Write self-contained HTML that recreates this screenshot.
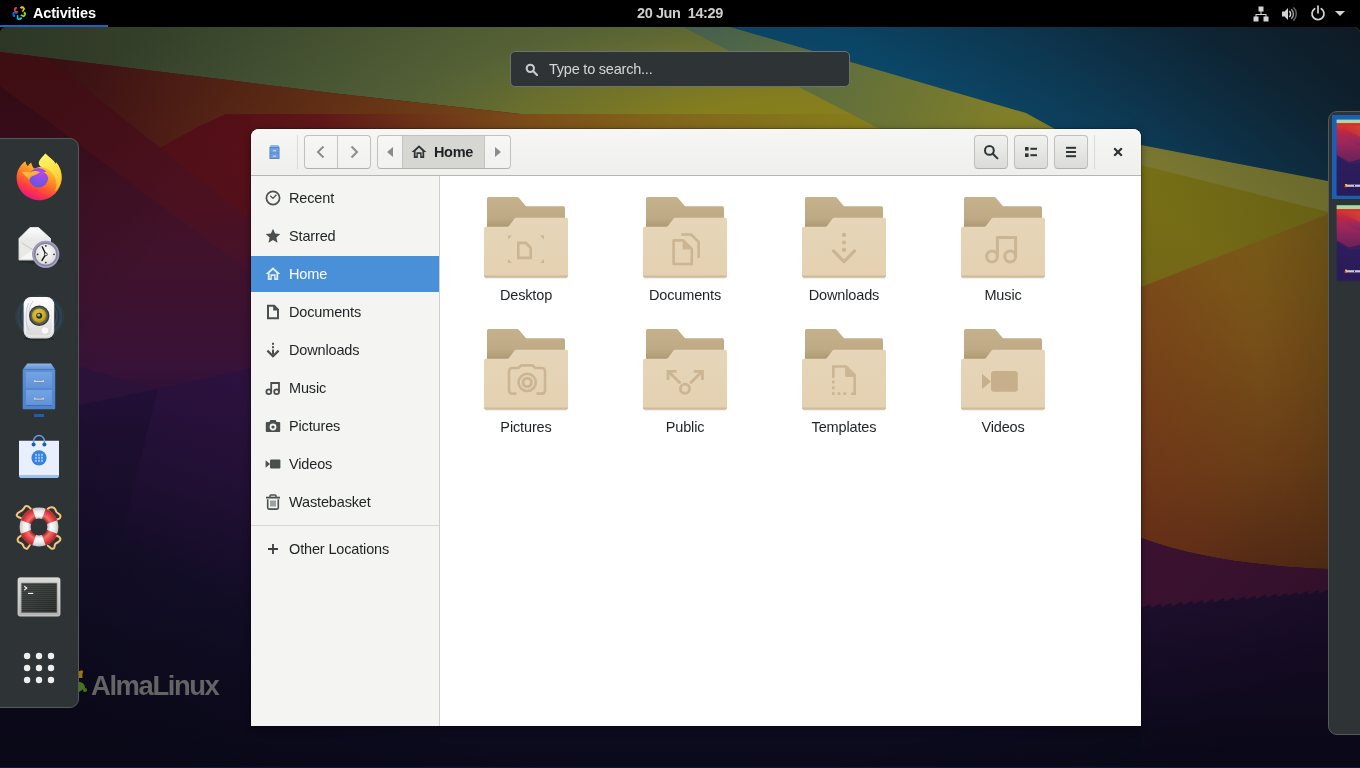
<!DOCTYPE html>
<html lang="en">
<head>
<meta charset="utf-8">
<title>Activities overview - Files</title>
<style>
*{box-sizing:border-box;margin:0;padding:0}
html,body{width:1360px;height:768px;overflow:hidden;background:#000;font-family:"Liberation Sans","DejaVu Sans",sans-serif;font-size:14.5px;color:#1e2224}
.abs{position:absolute}
#win,#topbar,#search,#alma{will-change:transform}
#bg{position:absolute;left:0;top:27px;width:1360px;height:741px;border-radius:6px 6px 0 0;overflow:hidden}
#bg svg{display:block}
#topbar{position:absolute;left:0;top:0;width:1360px;height:27px;background:#000;color:#fff;font-weight:bold}
#topbar .act{position:absolute;left:33px;top:4px;line-height:18px;letter-spacing:-.17px;color:#fff}
#topbar .ul{position:absolute;left:0;top:25px;width:108px;height:2px;background:#1c64c4}
#topbar .clock{position:absolute;left:637px;top:4px;line-height:18px;white-space:pre;color:#cfcfcf;letter-spacing:-.4px}
#search{position:absolute;left:510px;top:51px;width:340px;height:36px;background:#2e3436;border:1px solid #6c7172;border-radius:5px;color:#d6d7d4}
#search span{position:absolute;left:38px;top:8px;line-height:18px;letter-spacing:-.22px}
#dash{position:absolute;left:-1px;top:138px;width:80px;height:570px;background:#2e3436;border:1px solid #55595a;border-radius:0 9px 9px 0}
#ws{position:absolute;left:1328px;top:111px;width:40px;height:624px;background:#2e3436;border:1px solid #55595a;border-radius:9px 0 0 9px}
#win{position:absolute;left:251px;top:129px;width:890px;height:597px;border-radius:8px 8px 0 0;background:#fff;box-shadow:0 2px 9px rgba(0,0,0,.4),0 0 0 1px rgba(0,0,0,.22);overflow:hidden}
#hdr{position:absolute;left:0;top:0;width:890px;height:47px;background:linear-gradient(#f6f6f5,#efefee);border-bottom:1px solid #b6b6b3}
#side{position:absolute;left:0;top:47px;width:189px;height:550px;background:#f4f4f2;border-right:1px solid #cfcfcb}
.row{position:absolute;left:0;width:188px;height:36px}
.row span{position:absolute;left:38px;top:9px;line-height:18px;letter-spacing:-.15px;white-space:pre}
.row svg{position:absolute;left:14px;top:10px;width:16px;height:16px}
.row.sel{background:#4a90d9;color:#fff}
.btn{position:absolute;top:6px;height:34px;border:1px solid #c0c0bc;border-bottom-color:#b0b0ac;border-radius:4px;background:linear-gradient(#f0f0ef,#dbdbd9)}
.fold{position:absolute;width:120px;height:120px}
.fold svg{position:absolute;left:17px;top:-1px}
.fold span{position:absolute;left:-20px;width:160px;top:90px;text-align:center;line-height:18px;letter-spacing:-.14px}
</style>
</head>
<body>
<div id="bg"><svg width="1360" height="741" viewBox="0 27 1360 741">
<defs>
<linearGradient id="gBase" gradientUnits="userSpaceOnUse" x1="0" y1="0" x2="0" y2="768">
<stop offset=".08" stop-color="#400e16"/><stop offset=".19" stop-color="#420f20"/><stop offset=".26" stop-color="#421126"/><stop offset=".34" stop-color="#40122c"/><stop offset=".43" stop-color="#3b1233"/><stop offset=".48" stop-color="#381238"/><stop offset=".56" stop-color="#201032"/><stop offset=".75" stop-color="#120d26"/><stop offset="1" stop-color="#0b0a1c"/>
</linearGradient>
<linearGradient id="gBand" gradientUnits="userSpaceOnUse" x1="0" y1="60" x2="0" y2="380">
<stop offset="0" stop-color="#4f1118"/><stop offset=".125" stop-color="#50111a"/><stop offset=".44" stop-color="#4c1121"/><stop offset=".75" stop-color="#43122e"/><stop offset="1" stop-color="#391238"/>
</linearGradient>
<linearGradient id="gHillL" gradientUnits="userSpaceOnUse" x1="0" y1="114" x2="0" y2="400">
<stop offset="0" stop-color="#5a1018"/><stop offset=".3" stop-color="#53101b"/><stop offset=".55" stop-color="#491126"/><stop offset=".8" stop-color="#3e1232"/><stop offset="1" stop-color="#381237"/>
</linearGradient>
<linearGradient id="gGreen" gradientUnits="userSpaceOnUse" x1="0" y1="0" x2="900" y2="0">
<stop offset="0" stop-color="#38442f"/><stop offset=".25" stop-color="#475536"/><stop offset=".5" stop-color="#546136"/><stop offset=".75" stop-color="#5e6936"/><stop offset="1" stop-color="#646c38"/>
</linearGradient>
<radialGradient id="gYelR" gradientUnits="userSpaceOnUse" cx="830" cy="150" r="460" gradientTransform="translate(830 150) scale(1 .3) translate(-830 -150)">
<stop offset="0" stop-color="#8c821c"/><stop offset=".4" stop-color="#877f1d" stop-opacity=".95"/><stop offset=".75" stop-color="#7a7826" stop-opacity=".5"/><stop offset="1" stop-color="#6a6e30" stop-opacity="0"/>
</radialGradient>
<linearGradient id="gGreenV" gradientUnits="userSpaceOnUse" x1="0" y1="27" x2="40" y2="130">
<stop offset="0" stop-color="#000" stop-opacity=".12"/><stop offset="1" stop-color="#9a9020" stop-opacity=".18"/>
</linearGradient>
<linearGradient id="gRed" gradientUnits="userSpaceOnUse" x1="0" y1="0" x2="760" y2="0">
<stop offset="0" stop-color="#3f1012"/><stop offset=".13" stop-color="#4e1819"/><stop offset=".3" stop-color="#5b2716"/><stop offset=".5" stop-color="#673515"/><stop offset=".72" stop-color="#7a4c18"/><stop offset=".9" stop-color="#86681b"/><stop offset="1" stop-color="#857a1c"/>
</linearGradient>
<linearGradient id="gBlue" gradientUnits="userSpaceOnUse" x1="960" y1="130" x2="1200" y2="-160">
<stop offset="0" stop-color="#0b4768"/><stop offset=".3" stop-color="#0e3c58"/><stop offset=".7" stop-color="#12293a"/><stop offset="1" stop-color="#111c26"/>
</linearGradient>
<linearGradient id="gTeal" gradientUnits="userSpaceOnUse" x1="700" y1="27" x2="1000" y2="130">
<stop offset="0" stop-color="#476350"/><stop offset=".35" stop-color="#5a6c40"/><stop offset="1" stop-color="#807e28"/>
</linearGradient>
<linearGradient id="gYel" gradientUnits="userSpaceOnUse" x1="0" y1="100" x2="0" y2="300">
<stop offset="0" stop-color="#867d1b"/><stop offset=".4" stop-color="#777016"/><stop offset="1" stop-color="#736616"/>
</linearGradient>
<linearGradient id="gOr" gradientUnits="userSpaceOnUse" x1="0" y1="215" x2="0" y2="570">
<stop offset="0" stop-color="#7e6218"/><stop offset=".35" stop-color="#775018"/><stop offset=".7" stop-color="#6a3e17"/><stop offset="1" stop-color="#572c16"/>
</linearGradient>
<linearGradient id="gNavyR" gradientUnits="userSpaceOnUse" x1="0" y1="590" x2="0" y2="768">
<stop offset="0" stop-color="#1f0f2e"/><stop offset=".5" stop-color="#150c26"/><stop offset="1" stop-color="#0b0a1c"/>
</linearGradient>
<linearGradient id="gOrH" gradientUnits="userSpaceOnUse" x1="1141" y1="0" x2="1340" y2="0"><stop offset="0" stop-color="#7a2c1a" stop-opacity=".35"/><stop offset=".6" stop-color="#7a2c1a" stop-opacity="0"/><stop offset="1" stop-color="#3a3a10" stop-opacity=".2"/></linearGradient>
<linearGradient id="gNavL" gradientUnits="userSpaceOnUse" x1="0" y1="0" x2="0" y2="768"><stop offset=".479" stop-color="#25103a"/><stop offset=".56" stop-color="#1d0e30"/><stop offset=".677" stop-color="#160d29"/><stop offset=".75" stop-color="#120d26"/><stop offset="1" stop-color="#0b0a1c"/></linearGradient>
<linearGradient id="gGlow" gradientUnits="userSpaceOnUse" x1="262" y1="372" x2="150" y2="560"><stop offset="0" stop-color="#2d123f" stop-opacity=".9"/><stop offset="1" stop-color="#2d123f" stop-opacity="0"/></linearGradient>
<radialGradient id="gVig" gradientUnits="userSpaceOnUse" cx="680" cy="397" r="800" gradientTransform="translate(0 397) scale(1 .6) translate(0 -397)">
<stop offset=".72" stop-color="#000" stop-opacity="0"/><stop offset="1" stop-color="#000" stop-opacity=".2"/>
</radialGradient>
<linearGradient id="gHill" gradientUnits="userSpaceOnUse" x1="200" y1="0" x2="860" y2="0">
<stop offset="0" stop-color="#5a1018"/><stop offset=".18" stop-color="#5e1718"/><stop offset=".33" stop-color="#6d3318"/><stop offset=".5" stop-color="#7b4d19"/><stop offset=".7" stop-color="#82651b"/><stop offset="1" stop-color="#867d1c"/>
</linearGradient>
</defs>
<rect x="0" y="27" width="1360" height="741" fill="url(#gBase)"/>
<!-- green/yellow top -->
<polygon points="0,27 1360,27 1360,300 1141,300 1141,129 521,114 340,94 0,52" fill="url(#gGreen)"/>
<polygon points="0,27 1100,27 1100,160 521,160 521,114 340,94 0,52" fill="url(#gYelR)"/>
<!-- red/orange under green -->
<polygon points="47.3,57.8 340,94 521,114 225.5,114.5 199,126.5 175,139.7 160,148 100,100" fill="url(#gRed)"/>
<!-- darker red hill -->
<polygon points="0,52 47.3,57.8 100,100 160,148 225,200 251,221 400,340 400,382 251,272 154,200 80,145 0,86" fill="url(#gBand)"/>
<polygon points="225.5,114.5 400,114 400,340 251,221 225,200 160,148 175,139.7 199,126.5" fill="url(#gHillL)"/>
<polygon points="251,114 1000,114 1000,140 251,140" fill="url(#gHill)"/>
<!-- maroon left diag -->
<!-- yellow right -->
<polygon points="1000,105 1026,113 1055,129 1141,145 1328,181 1360,187 1360,202 1328,214 1141,287 1100,300 1000,300" fill="url(#gYel)"/>
<!-- teal band top -->
<polygon points="683,27 730,27 1026,113 1055,129 880,129" fill="url(#gTeal)"/>
<!-- light band right -->
<polygon points="1055,129 1141,145 1328,181 1360,187 1360,222 1328,212 1141,165 1080,146" fill="#7d7c36" opacity=".9"/>
<!-- blue -->
<polygon points="730,27 1360,27 1360,187 1328,181 1141,145 1055,129 1026,113" fill="url(#gBlue)"/>
<!-- orange right -->
<path d="M1141,287 L1328,214 L1360,202 L1360,575 L1328,569 C1250,566 1190,556 1141,538 Z" fill="url(#gOr)"/>
<path d="M1141,287 L1328,214 L1360,202 L1360,575 L1328,569 C1250,566 1190,556 1141,538 Z" fill="url(#gOrH)"/>
<!-- purple band right -->
<path d="M1141,538 C1190,556 1250,566 1328,569 L1360,571 L1360,596 L1328,598 L1141,614 Z" fill="#3a1230"/>
<path d="M1141,608.0 L1150.0,604.5 L1151.5,607.7 L1160.5,603.6 L1162.0,606.8 L1171.0,602.7 L1172.5,605.9 L1181.5,601.8 L1183.0,605.0 L1192.0,600.9 L1193.5,604.1 L1202.5,600.0 L1204.0,603.2 L1213.0,599.1 L1214.5,602.3 L1223.5,598.2 L1225.0,601.4 L1234.0,597.3 L1235.5,600.5 L1244.5,596.4 L1246.0,599.6 L1255.0,595.5 L1256.5,598.7 L1265.5,594.6 L1267.0,597.8 L1276.0,593.7 L1277.5,596.9 L1286.5,592.8 L1288.0,596.0 L1297.0,591.9 L1298.5,595.1 L1307.5,591.0 L1309.0,594.2 L1318.0,590.1 L1319.5,593.3 L1328.5,589.2 L1330.0,592.4 L1339.0,588.3 L1340.5,591.5 L1349.5,587.4 L1351.0,590.6 L1360.0,586.5 L1361.5,589.7 L1375,768 L1141,768 Z" fill="url(#gNavyR)"/>
<!-- left V -->
<polygon points="0,345 79,367 158,389 79,405 0,420" fill="#2b1239"/>
<polygon points="0,420 79,405 158,389 251,368 400,340 1141,340 1141,768 0,768" fill="url(#gNavL)"/>
<polygon points="158,389 251,368 400,340 400,620 100,620" fill="url(#gGlow)"/>
<rect x="0" y="470" width="1360" height="298" fill="url(#gBot)"/>
<rect x="0" y="27" width="1360" height="741" fill="url(#gVig)"/>
<rect x="0" y="767" width="1360" height="1" fill="#0b1a3c"/>
</svg></div>
<div id="topbar">
<svg class="abs" style="left:12px;top:6px" width="14" height="14" viewBox="0 0 30 30">
<g fill="none" stroke-width="3.4" stroke-linecap="round">
<path d="M9 4c-3 2-4 5-2 8l5 1" stroke="#ef3e42"/><circle cx="7.5" cy="5" r="2.3" fill="#ef3e42" stroke="none"/>
<path d="M19 3c3-1 6 0 7 3l-3 5" stroke="#f9c20a"/><circle cx="21" cy="3.6" r="2.3" fill="#f9c20a" stroke="none"/>
<path d="M27 14c2 3 1 6-2 8l-5-2" stroke="#86d22a"/><circle cx="27" cy="16" r="2.3" fill="#86d22a" stroke="none"/>
<path d="M20 26c-2 2-6 3-8 1l0-6" stroke="#24c2ff"/><circle cx="18" cy="27" r="2.3" fill="#24c2ff" stroke="none"/>
<path d="M5 22c-3-2-3-6-1-8l6 1" stroke="#0a6fe8"/><circle cx="4" cy="20" r="2.3" fill="#0a6fe8" stroke="none"/>
</g></svg>
<span class="act">Activities</span><div class="ul"></div>
<span class="clock">20 Jun  14:29</span>
<svg class="abs" style="left:1252.5px;top:5.5px" width="16" height="16" viewBox="0 0 16 16" fill="#d4d4d4">
<rect x="5.5" y="0.5" width="5" height="5"/><rect x="0.5" y="10.5" width="5" height="5"/><rect x="10.5" y="10.5" width="5" height="5"/>
<path d="M7.5 5h1v3h5v3h-1v-2h-9v2h-1v-3h5z"/></svg>
<svg class="abs" style="left:1280.5px;top:5.5px" width="16" height="16" viewBox="0 0 16 16">
<path d="M1 5.5h2.6l3.4-3.6v12.2l-3.4-3.6h-2.6z" fill="#d4d4d4"/>
<path d="M8.3 5.2a3.6 3.6 0 0 1 0 5.6" fill="none" stroke="#d4d4d4" stroke-width="1.5"/>
<path d="M10.3 3.2a6.4 6.4 0 0 1 0 9.6" fill="none" stroke="#9a9a9a" stroke-width="1.5"/>
<path d="M12.4 1.4a9 9 0 0 1 0 13.2" fill="none" stroke="#5e5e5e" stroke-width="1.5"/></svg>
<svg class="abs" style="left:1309.5px;top:4.5px" width="16" height="16" viewBox="0 0 16 16" fill="none" stroke="#d4d4d4" stroke-width="1.7" stroke-linecap="round">
<path d="M4.7 3.7a6 6 0 1 0 6.6 0"/><path d="M8 1.2v6.6"/></svg>
<svg class="abs" style="left:1335px;top:11px" width="10" height="5" viewBox="0 0 10 5"><path d="M0 0h10l-5 5z" fill="#d4d4d4"/></svg>
</div>
<div id="search"><svg class="abs" style="left:14px;top:10.5px" width="13.5" height="13.5" viewBox="0 0 16 16" fill="none" stroke="#c9cbc8" stroke-width="2.5"><circle cx="6.3" cy="6.3" r="4.3"/><path d="M9.6 9.6l4.6 4.6" stroke-linecap="round"/></svg><span>Type to search...</span></div>
<div id="dash"><svg class="abs" style="left:16px;top:14px" width="48" height="48" viewBox="0 0 48 48">
<defs>
<linearGradient id="ffb" x1=".75" y1=".05" x2=".32" y2="1"><stop offset="0" stop-color="#fff44f"/><stop offset=".3" stop-color="#ffbd2e"/><stop offset=".55" stop-color="#ff7a22"/><stop offset=".8" stop-color="#ff3647"/><stop offset="1" stop-color="#e31587"/></linearGradient>
<linearGradient id="fff" x1=".3" y1="0" x2=".8" y2="1"><stop offset="0" stop-color="#fff36a"/><stop offset=".5" stop-color="#ffe045"/><stop offset="1" stop-color="#ffb22c"/></linearGradient>
<radialGradient id="ffg" cx=".6" cy=".25" r=".9"><stop offset="0" stop-color="#b544f0"/><stop offset=".45" stop-color="#8b4ee6"/><stop offset="1" stop-color="#4a5be0"/></radialGradient>
<linearGradient id="ffh" x1="0" y1="0" x2="1" y2="1"><stop offset="0" stop-color="#ffcf4a"/><stop offset="1" stop-color="#ff8a1c"/></linearGradient>
</defs>
<path d="M9.5 8.2C9.8 10.6 10.6 12 12 13.2 13 11.3 14 10.4 15.3 9.6 15.6 12 16.6 14 18.2 15.6L30 12 29.3.5C33 4.2 37.6 7 40 11.2 40.3 10.6 40.2 10 40 9.3 43.6 13.4 45.6 18.5 45.6 24.4 45.6 37 35.5 47.2 23 47.2 10.6 47.2.6 37 .6 24.6.6 18 3.8 12.3 9.5 8.2Z" fill="url(#ffb)"/>
<path d="M29.3.5C33 4.2 37.6 7 40 11.200000000000001 40.3 10.6 40.2 10 40 9.3 43.6 13.4 45.6 18.5 45.6 24.4 45.6 30 43 35 39 38.500000000000004 41.5 33 41 25 36 19.5 32 15 23 15 22.8 10.5 22.6 7 26.5 3.8 29.3.5Z" fill="url(#fff)"/>
<circle cx="22.6" cy="24.6" r="9.6" fill="url(#ffg)"/>
<path d="M5.8 19.600000000000001C8.5 18.2 12 18.5 14.5 19.400000000000002 17.5 17.6 21 17.8 24 19.2 22 20.6 20.5 21.6 18.6 22.200000000000003 15.6 23 13.6 24.4 13.2 27.200000000000003 11.6 24.4 9 22.6 5.8 19.600000000000001Z" fill="url(#ffh)"/>
<path d="M24.6 15.6C28 15.8 31 17.3 32.5 19.200000000000003 30.5 18.6 28.8 18.8 27.6 19.6 29.8 20.2 31.5 22 32 24.400000000000002 33.6 21 32.5 17.8 30 15.8 28.4 15 26.400000000000002 15 24.6 15.6Z" fill="#ffb22c"/>
</svg>
<svg class="abs" style="left:16px;top:84px" width="48" height="48" viewBox="0 0 48 48">
<defs>
<linearGradient id="ev1" x1="0" y1="0" x2="0" y2="1"><stop offset="0" stop-color="#fdfdfd"/><stop offset="1" stop-color="#c9c9c9"/></linearGradient>
<radialGradient id="ev2" cx=".5" cy=".4" r=".6"><stop offset="0" stop-color="#fff"/><stop offset="1" stop-color="#d9d9d6"/></radialGradient>
</defs>
<ellipse cx="24" cy="38" rx="22" ry="3" fill="#000" opacity=".18"/>
<path d="M3 15.5L14 4.500000000000001 22.5 4.500000000000001 34.5 15.5 34.5 37 3 37Z" fill="url(#ev1)" stroke="#f4f4f4" stroke-width=".8"/>
<path d="M5.5 19.5L31.5 13.5 33.5 16 33.5 36 4 36 4 20Z" fill="#e9e9e8"/>
<path d="M4 36L18 26 33.5 36Z" fill="#f6f6f6"/>
<path d="M6 20L17 27" stroke="#9cb59c" stroke-width=".6" fill="none"/>
<circle cx="29.8" cy="31.3" r="13.6" fill="#8c86a8"/>
<circle cx="29.8" cy="31.3" r="12.6" fill="none" stroke="#a7a2bf" stroke-width="1.2"/>
<circle cx="29.8" cy="31.3" r="10.8" fill="url(#ev2)" stroke="#6f6a8c" stroke-width=".7"/>
<g fill="#333"><circle cx="29.8" cy="22.9" r=".9"/><circle cx="29.8" cy="39.6" r=".9"/><circle cx="21.6" cy="31.3" r=".9"/><circle cx="38" cy="31.3" r=".9"/></g>
<path d="M29.8 31.3L26.3 24M29.8 31.3L26 37.4" stroke="#111" stroke-width="1.4" stroke-linecap="round" fill="none"/>
<circle cx="29.8" cy="31.3" r="1.5" fill="#f2f2f2" stroke="#111" stroke-width=".8"/>
</svg>
<svg class="abs" style="left:12px;top:150px" width="56" height="56" viewBox="0 0 56 56">
<defs>
<linearGradient id="rb1" x1="0" y1="0" x2="0" y2="1"><stop offset="0" stop-color="#fff"/><stop offset=".5" stop-color="#ececec"/><stop offset="1" stop-color="#d6d6d6"/></linearGradient>
<radialGradient id="rb2" cx=".45" cy=".4" r=".6"><stop offset="0" stop-color="#ecd03a"/><stop offset=".7" stop-color="#cdac16"/><stop offset="1" stop-color="#a0860a"/></radialGradient>
</defs>
<g fill="none" stroke="#35557c"><ellipse cx="27.5" cy="27.5" rx="21.5" ry="19" stroke-width="3" opacity=".4"/><ellipse cx="27.5" cy="27.5" rx="17.5" ry="16" stroke-width="2" opacity=".55"/><ellipse cx="27.5" cy="27.5" rx="24" ry="21" stroke-width="1" opacity=".25"/></g>
<ellipse cx="27" cy="49.5" rx="15" ry="2" fill="#000" opacity=".25"/>
<rect x="11.6" y="8" width="30.6" height="41.4" rx="7.5" fill="url(#rb1)"/>
<rect x="13.3" y="11" width="27" height="36" rx="5" fill="none" stroke="#fff" stroke-width=".8" opacity=".8"/>
<circle cx="27.2" cy="26.7" r="10.2" fill="#33383a"/><circle cx="27.2" cy="26.7" r="9" fill="#565b5c"/>
<circle cx="27.2" cy="26.7" r="7.2" fill="url(#rb2)"/>
<circle cx="27.2" cy="26.7" r="3" fill="#2b2e30"/><circle cx="26.7" cy="26" r="1.6" fill="#a9adae"/>
<circle cx="33" cy="41.5" r="3.8" fill="#fafafa" stroke="#d0d0d0" stroke-width=".6"/>
<circle cx="19.2" cy="42" r="2.3" fill="none" stroke="#dcdcdc" stroke-width=".6"/>
<path d="M17 14c-4 6-4 22 0 27M21 12c-3 4-4 8-4 12" stroke="#9db4d6" stroke-width=".7" fill="none" opacity=".8"/>
</svg>
<svg class="abs" style="left:16px;top:222px" width="48" height="56" viewBox="0 0 48 56">
<defs>
<linearGradient id="fc1" x1="0" y1="0" x2="0" y2="1"><stop offset="0" stop-color="#8fb8ea"/><stop offset="1" stop-color="#5b8fd6"/></linearGradient>
<linearGradient id="fc2" x1="0" y1="0" x2="0" y2="1"><stop offset="0" stop-color="#5b8fd8"/><stop offset="1" stop-color="#4d82cc"/></linearGradient>
<linearGradient id="fc3" x1="0" y1="0" x2="0" y2="1"><stop offset="0" stop-color="#74a3e2"/><stop offset="1" stop-color="#6193d9"/></linearGradient>
</defs>
<path d="M11.3 2.5L35 2.500000000000001 39.2 8.6 6.7 8.6Z" fill="url(#fc1)"/>
<rect x="6.7" y="8.4" width="32.5" height="39.8" rx=".8" fill="url(#fc2)"/>
<rect x="10" y="11" width="26" height="16" fill="url(#fc3)"/>
<rect x="10" y="29" width="26" height="15" fill="url(#fc3)"/>
<rect x="10" y="44" width="26" height=".9" fill="#3d6db4"/>
<path d="M18.800000000000004 19.2v1.5h8.4v-1.5" fill="none" stroke="#f0efe9" stroke-width="1.1"/><path d="M18.6 21.5h9" stroke="#7a7a70" stroke-width=".7"/>
<path d="M18.800000000000004 36.7v1.5h8.4v-1.5" fill="none" stroke="#f0efe9" stroke-width="1.1"/><path d="M18.6 39h9" stroke="#7a7a70" stroke-width=".7"/>
<rect x="18" y="53" width="10" height="3" fill="#1a5fb4"/>
</svg>
<svg class="abs" style="left:16px;top:293px" width="48" height="48" viewBox="0 0 48 48">
<path d="M3 8.8h40v34.2a3 3 0 0 1-3 3h-34a3 3 0 0 1-3-3z" fill="#e9effc"/>
<path d="M3 43h40v0a3 3 0 0 1-3 3h-34a3 3 0 0 1-3-3z" fill="#99c1f1"/>
<path d="M17.6 12.4v-3.4a5.4 5.4 0 0 1 10.8 0v3.4" fill="none" stroke="#62a0ea" stroke-width="1.5"/>
<circle cx="17.6" cy="12.6" r="2" fill="#1a5fb4"/><circle cx="28.4" cy="12.6" r="2" fill="#1a5fb4"/>
<circle cx="23" cy="25.8" r="7.6" fill="#3584e4"/>
<g fill="#99c1f1"><rect x="19" y="21.8" width="2" height="2"/><rect x="22" y="21.8" width="2" height="2"/><rect x="25" y="21.8" width="2" height="2"/><rect x="19" y="24.8" width="2" height="2"/><rect x="22" y="24.8" width="2" height="2"/><rect x="25" y="24.8" width="2" height="2"/><rect x="19" y="27.8" width="2" height="2"/><rect x="22" y="27.8" width="2" height="2"/><rect x="25" y="27.8" width="2" height="2"/></g>
</svg>
<svg class="abs" style="left:15px;top:364px" width="48" height="48" viewBox="0 0 48 48">
<defs><radialGradient id="hp1" cx=".5" cy=".5" r=".5"><stop offset=".42" stop-color="#bdbdbd"/><stop offset=".6" stop-color="#fbfbfb"/><stop offset=".8" stop-color="#ededed"/><stop offset="1" stop-color="#c4c4c4"/></radialGradient>
<radialGradient id="hp2" gradientUnits="userSpaceOnUse" cx="24" cy="24" r="19.4"><stop offset=".42" stop-color="#9c1a1a"/><stop offset=".62" stop-color="#f27070"/><stop offset=".8" stop-color="#e54848"/><stop offset="1" stop-color="#b81f1f"/></radialGradient></defs>
<g fill="none" stroke="#f5c67c" stroke-width="2" stroke-linejoin="round" stroke-linecap="round">
<path d="M5.8 15C3 14 1.5 13 1.7 12 2 10.5 3 9.6 5 8.6 7.5 7.4 9 6 10 3.7 11 2.6 12.6 3 13.5 3.6L15.7 5.8"/>
<path d="M32.9 5.8C34 4.6 35.6 4 37.1 4.2 38.6 4.4 39.6 5.2 40.2 6.3 40.9 7.6 41 8.6 41.8 9.4 43 10.6 45 11 45.4 12.5 45.6 13.8 45.2 15 44.4 15.6L41.8 16.7"/>
<path d="M5.8 32.8C4.4 33.6 3 34.6 2.7 36 2.5 37.2 2.6 38 3.2 38.6 4.4 39.8 6.4 40 7.4 41.2 8.4 42.4 8.6 44 9.5 44.8 10.4 45.6 11.8 45.8 12.6 45.3L14.7 42.2"/>
<path d="M41.8 32.8C43.6 33.4 45.2 34.6 45.4 36 45.5 37.4 44.6 38.4 43.3 39 42 39.6 41 40.2 40.2 41.2 39.4 42.4 39.8 43.8 39.2 44.8 38.4 45.8 37 45.8 36 45.3L32.9 42.7"/>
</g>
<circle cx="24" cy="24" r="19.4" fill="url(#hp1)"/>
<g fill="url(#hp2)">
<path id="lsw" d="M24 24L5.77 17.36A19.4 19.4 0 0 1 17.36 5.77Z"/>
<path d="M24 24L5.77 17.36A19.4 19.4 0 0 1 17.36 5.77Z" transform="rotate(90 24 24)"/>
<path d="M24 24L5.77 17.36A19.4 19.4 0 0 1 17.36 5.77Z" transform="rotate(180 24 24)"/>
<path d="M24 24L5.77 17.36A19.4 19.4 0 0 1 17.36 5.77Z" transform="rotate(270 24 24)"/>
</g>
<circle cx="24" cy="24" r="8.4" fill="#2e3436"/>
</svg>
<svg class="abs" style="left:16px;top:434px" width="48" height="48" viewBox="0 0 48 48">
<defs><linearGradient id="tm1" x1="0" y1="0" x2="0" y2="1"><stop offset="0" stop-color="#d9d9d7"/><stop offset="1" stop-color="#b4b4b2"/></linearGradient>
<linearGradient id="tm2" x1="0" y1="0" x2="1" y2="1"><stop offset="0" stop-color="#3a403d"/><stop offset="1" stop-color="#232624"/></linearGradient>
<pattern id="tm3" width="2" height="2" patternUnits="userSpaceOnUse"><rect width="2" height="1" fill="#fff" opacity=".07"/></pattern></defs>
<rect x="2" y="4.8" width="42" height="38.3" rx="2" fill="url(#tm1)" stroke="#e4e4e2" stroke-width=".7"/>
<rect x="5.2" y="10" width="35.8" height="29.8" fill="url(#tm2)" stroke="#8e8e8c" stroke-width=".6"/>
<rect x="5.2" y="10" width="35.8" height="29.8" fill="url(#tm3)"/>
<path d="M8.2 13.2l2.600000000000001 1.9000000000000004-2.600000000000001 1.9000000000000004" fill="none" stroke="#fff" stroke-width="1.1"/><path d="M12 20.4h5.2" stroke="#fff" stroke-width="1.1"/>
</svg>
<svg class="abs" style="left:16px;top:505px" width="48" height="48" viewBox="0 0 48 48" fill="#eeeeec">
<circle cx="11.100000000000001" cy="12" r="3.2"/><circle cx="23" cy="12" r="3.2"/><circle cx="35" cy="12" r="3.2"/>
<circle cx="11.100000000000001" cy="24" r="3.2"/><circle cx="23" cy="24" r="3.2"/><circle cx="35" cy="24" r="3.2"/>
<circle cx="11.100000000000001" cy="36" r="3.2"/><circle cx="23" cy="36" r="3.2"/><circle cx="35" cy="36" r="3.2"/>
</svg></div>
<div id="ws"><svg class="abs" style="left:3px;top:3px" width="40" height="170" viewBox="0 0 40 170">
<defs><linearGradient id="wt" x1="0" y1="0" x2="0" y2="1"><stop offset="0" stop-color="#a6dba4"/><stop offset=".045" stop-color="#a6dba4"/><stop offset=".05" stop-color="#d8362e"/><stop offset=".16" stop-color="#c02840"/><stop offset=".3" stop-color="#8e2862"/><stop offset=".42" stop-color="#562468"/><stop offset=".5" stop-color="#382064"/><stop offset=".7" stop-color="#2a1c5a"/><stop offset="1" stop-color="#221a4e"/></linearGradient>
<linearGradient id="wo" x1="0" y1="0" x2="1" y2="0"><stop offset="0" stop-color="#e8402a" stop-opacity="0"/><stop offset="1" stop-color="#f0802a"/></linearGradient></defs>
<rect x="0" y="0" width="40" height="84" fill="#1b5fb4"/>
<g id="thumb"><rect x="4.6" y="4.6" width="36" height="75.4" fill="url(#wt)"/>
<path d="M5 11l35 0v16z" fill="url(#wo)" opacity=".45"/>
<path d="M5 14l12 12 23 9v12l-23 2-12-8z" fill="#b02650" opacity=".5"/>
<path d="M5 40l12 7 23-6v40h-35z" fill="#2c1e5c" opacity=".75"/>
<rect x="13" y="69" width="2" height="3" fill="#f3c52b"/><rect x="12.6" y="70.6" width="1.400000000000001" height="1.8" fill="#e5413f"/><rect x="15" y="69.6" width="20" height="2.2" fill="#e8e8f0" opacity=".85"/><rect x="22" y="70" width="1" height="1.400000000000001" fill="#2a1c5a"/><rect x="29" y="70" width="1.400000000000001" height="1.400000000000001" fill="#2a1c5a"/></g>
<use href="#thumb" y="85.6"/>
</svg></div>
<div id="win">
<div id="hdr"><svg class="abs" style="left:17.5px;top:15.5px" width="11" height="15" viewBox="0 0 14 16" preserveAspectRatio="none"><path d="M2.2 0h9.6l1.6 2.2h-12.8z" fill="#8fb8ea"/><rect x=".6" y="2" width="12.8" height="13" rx=".6" fill="#4f83cf"/><rect x="1.8" y="3.2" width="10.4" height="5" fill="#6d9fe0"/><rect x="1.8" y="9" width="10.4" height="5" fill="#6d9fe0"/><rect x="5" y="5.6" width="4" height="1" fill="#e8e8e0"/><rect x="5" y="11.4" width="4" height="1" fill="#e8e8e0"/></svg>
<div class="abs" style="left:46px;top:6px;width:1px;height:34px;background:#d9d9d6"></div>
<div class="btn" style="left:53px;width:67px;background:linear-gradient(#f6f6f5,#f1f1f0)"><div class="abs" style="left:32px;top:0;width:1px;height:32px;background:#c3c3bf"></div>
<svg class="abs" style="left:8px;top:8px" width="16" height="16" viewBox="0 0 16 16" fill="none" stroke="#8b8e8f" stroke-width="2"><path d="M10.5 2.5L5 8l5.5 5.500000000000001"/></svg>
<svg class="abs" style="left:41px;top:8px" width="16" height="16" viewBox="0 0 16 16" fill="none" stroke="#8b8e8f" stroke-width="2"><path d="M5.5 2.5L11 8l-5.500000000000001 5.500000000000001"/></svg></div>
<div class="btn" style="left:126px;width:134px;background:linear-gradient(#f6f6f5,#f1f1f0);overflow:hidden">
<div class="abs" style="left:24px;top:0;width:83px;height:32px;background:#d6d6d3;border-left:1px solid #c3c3bf;border-right:1px solid #c3c3bf"></div>
<svg class="abs" style="left:9px;top:11px" width="6" height="10" viewBox="0 0 6 10"><path d="M6 0v10l-6-5z" fill="#8b8e8f"/></svg>
<svg class="abs" style="left:117px;top:11px" width="6" height="10" viewBox="0 0 6 10"><path d="M0 0v10l6-5z" fill="#8b8e8f"/></svg>
<svg class="abs" style="left:33px;top:8px" width="16" height="16" viewBox="0 0 16 16"><path d="M8 1.2L.6 8h2.2v6h4v-4h2.400000000000001v4h4V8h2.2z M8 3.8l3.400000000000001 3.2v5.2h-.8v-4h-5.2v4h-.8V7z" fill="#2e3436" fill-rule="evenodd"/></svg>
<span class="abs" style="left:56px;top:7px;line-height:18px;font-weight:bold;letter-spacing:-.35px">Home</span></div>
<div class="btn" style="left:723px;width:34px"><svg class="abs" style="left:8px;top:8px" width="16" height="16" viewBox="0 0 16 16" fill="none" stroke="#2e3436" stroke-width="2"><circle cx="6.4" cy="6.4" r="4.4"/><path d="M9.8 9.8l4.6 4.6" stroke-linecap="round"/></svg></div>
<div class="btn" style="left:763px;width:34px"><svg class="abs" style="left:8px;top:8px" width="16" height="16" viewBox="0 0 16 16" fill="#2e3436"><rect x="2" y="3" width="3.6" height="3.6"/><rect x="2" y="9.4" width="3.6" height="3.6"/><rect x="7.4" y="3.8" width="6.6" height="2"/><rect x="7.4" y="10.2" width="6.6" height="2"/></svg></div>
<div class="btn" style="left:803px;width:34px"><svg class="abs" style="left:8px;top:8px" width="16" height="16" viewBox="0 0 16 16" fill="#2e3436"><rect x="3" y="2.8" width="10" height="2"/><rect x="3" y="7" width="10" height="2"/><rect x="3" y="11.2" width="10" height="2"/></svg></div>
<div class="abs" style="left:843px;top:6px;width:1px;height:34px;background:#d9d9d6"></div>
<svg class="abs" style="left:862px;top:18px" width="10" height="10" viewBox="0 0 10 10"><path d="M1.2 1.2l7.6 7.6M8.8 1.2l-7.6 7.6" stroke="#2e3436" stroke-width="2.2" fill="none"/></svg></div>
<div id="side"><div class="row" style="top:4px"><svg viewBox="0 0 16 16" fill="none" stroke="#4b4f50" stroke-width="1.7"><circle cx="8" cy="8" r="6.6"/><path d="M5.2 5.8L8 8.4l3.4-3.6" stroke-width="1.3"/></svg><span>Recent</span></div>
<div class="row" style="top:42px"><svg viewBox="0 0 16 16"><path d="M8 .8l2.100000000000001 4.800000000000001 5.2.5-3.9 3.5 1.1 5.2L8 12.1l-4.5 2.700000000000001 1.1-5.2L.7 6.1l5.2-.5z" fill="#4b4f50"/></svg><span>Starred</span></div>
<div class="row sel" style="top:80px"><svg viewBox="0 0 16 16"><path d="M8 1.2L.6 8h2.2v6h4v-4h2.400000000000001v4h4V8h2.2z M8 3.8l3.400000000000001 3.2v5.2h-.8v-4h-5.2v4h-.8V7z" fill="#e4eefa" fill-rule="evenodd"/></svg><span>Home</span></div>
<div class="row" style="top:118px"><svg viewBox="0 0 16 16"><path d="M2 .8h7.6l4.4 4.4V15.2H2z M4 2.8v10.4h8V6.6H8.2V2.8z" fill="#4b4f50" fill-rule="evenodd"/></svg><span>Documents</span></div>
<div class="row" style="top:156px"><svg viewBox="0 0 16 16" fill="#4b4f50"><rect x="7" y=".8" width="2" height="2"/><rect x="7" y="4.2" width="2" height="2"/><rect x="7" y="7.6" width="2" height="5"/><path d="M2.4 8.6L8 14.2l5.6-5.6" fill="none" stroke="#4b4f50" stroke-width="2.2"/></svg><span>Downloads</span></div>
<div class="row" style="top:194px"><svg viewBox="0 0 16 16" fill="none" stroke="#4b4f50" stroke-width="1.8"><circle cx="3.8" cy="11.8" r="2.4"/><circle cx="11.600000000000001" cy="11.8" r="2.4"/><path d="M6.2 11.8V3h7.8v8.8"/></svg><span>Music</span></div>
<div class="row" style="top:232px"><svg viewBox="0 0 16 16"><path d="M5.4 2h5.2l1 2H14.200000000000001a1 1 0 0 1 1 1v8a1 1 0 0 1-1 1H1.8a1 1 0 0 1-1-1V5a1 1 0 0 1 1-1H4.4z M8 5.6a3.4 3.4 0 1 0 0 6.8 3.4 3.4 0 0 0 0-6.8z M8 7.4a1.6 1.6 0 1 1 0 3.2 1.6 1.6 0 0 1 0-3.2z" fill="#4b4f50" fill-rule="evenodd"/></svg><span>Pictures</span></div>
<div class="row" style="top:270px"><svg viewBox="0 0 16 16" fill="#4b4f50"><rect x="5" y="3.6" width="10.4" height="9" rx="1"/><path d="M.6 4.2v7.6l4.4-3.8z"/></svg><span>Videos</span></div>
<div class="row" style="top:308px"><svg viewBox="0 0 16 16" fill="none" stroke="#4b4f50"><path d="M2.7 5.2v8.6a1.3 1.3 0 0 0 1.3 1.3h8a1.3 1.3 0 0 0 1.3-1.3V5.2" stroke-width="1.6"/><path d="M1 3.6h14" stroke-width="1.8"/><path d="M5 3V1.8a.8.8 0 0 1 .8-.8h4.4a.8.8 0 0 1 .8.800000000000001V3" stroke-width="1.4"/><path d="M6 6.500000000000001v6M8 6.500000000000001v6M10 6.500000000000001v6" stroke-width="1"/></svg><span>Wastebasket</span></div>
<div class="abs" style="left:0;top:349px;width:188px;height:1px;background:#d7d7d3"></div>
<div class="row" style="top:355px"><svg viewBox="0 0 16 16"><path d="M8 3v10M3 8h10" stroke="#3a3e40" stroke-width="1.8" fill="none"/></svg><span>Other Locations</span></div></div>
<div id="main"><svg width="0" height="0" style="position:absolute"><defs><linearGradient id="fb" x1="0" y1="0" x2="0" y2="1"><stop offset="0" stop-color="#c5b18c"/><stop offset=".35" stop-color="#bfaa86"/><stop offset=".55" stop-color="#a8946f"/></linearGradient><linearGradient id="ff1" x1="0" y1="0" x2="0" y2="1"><stop offset="0" stop-color="#e6d5b8"/><stop offset="1" stop-color="#e4d1b2"/></linearGradient></defs></svg>
<div class="fold" style="left:215px;top:67px"><svg width="86" height="84" viewBox="-1 -1 86 84">
<path d="M3 2.6A1.600000000000001 1.600000000000001 0 0 1 4.6 1H33.2a2 2 0 0 1 1.4.6L42 10.3H79.4A1.600000000000001 1.600000000000001 0 0 1 81 11.9V60H3Z" fill="url(#fb)"/>
<path d="M0 32.4A1.600000000000001 1.600000000000001 0 0 1 1.6 30.8H23.2a2.4 2.4 0 0 0 1.8-.8L30.6 22.6a2.4 2.4 0 0 1 1.8-.8H82.4A1.600000000000001 1.600000000000001 0 0 1 84 23.400000000000002V79.8A1.600000000000001 1.600000000000001 0 0 1 82.4 81.4H1.6A1.600000000000001 1.600000000000001 0 0 1 0 79.8Z" fill="url(#ff1)"/>
<path d="M0 79.6h84v.2a1.600000000000001 1.600000000000001 0 0 1-1.6 1.600000000000001H1.6A1.600000000000001 1.600000000000001 0 0 1 0 79.8Z" fill="#d0ba98"/>
<path d="M1 82h82" stroke="#000" stroke-opacity=".1" stroke-width="1.2"/>
<g fill="#cbb593"><path d="M24 39.5h4l-4 4zM60 39.5v4l-4-4zM24 67v-4l4 4zM60 67h-4l4-4z"/><path d="M33 45.6h9.4l5.600000000000001 5.600000000000001V63.2H33z M35.6 48.2v12.4h9.8V52.6l-4.4-4.4z" fill-rule="evenodd"/></g></svg><span>Desktop</span></div>
<div class="fold" style="left:374px;top:67px"><svg width="86" height="84" viewBox="-1 -1 86 84">
<path d="M3 2.6A1.600000000000001 1.600000000000001 0 0 1 4.6 1H33.2a2 2 0 0 1 1.4.6L42 10.3H79.4A1.600000000000001 1.600000000000001 0 0 1 81 11.9V60H3Z" fill="url(#fb)"/>
<path d="M0 32.4A1.600000000000001 1.600000000000001 0 0 1 1.6 30.8H23.2a2.4 2.4 0 0 0 1.8-.8L30.6 22.6a2.4 2.4 0 0 1 1.8-.8H82.4A1.600000000000001 1.600000000000001 0 0 1 84 23.400000000000002V79.8A1.600000000000001 1.600000000000001 0 0 1 82.4 81.4H1.6A1.600000000000001 1.600000000000001 0 0 1 0 79.8Z" fill="url(#ff1)"/>
<path d="M0 79.6h84v.2a1.600000000000001 1.600000000000001 0 0 1-1.6 1.600000000000001H1.6A1.600000000000001 1.600000000000001 0 0 1 0 79.8Z" fill="#d0ba98"/>
<path d="M1 82h82" stroke="#000" stroke-opacity=".1" stroke-width="1.2"/>
<g fill="none" stroke="#cbb593" stroke-width="2.6" stroke-linejoin="round"><path d="M30.6 44.400000000000006h9.6l8.600000000000001 8.600000000000001v15H30.6z"/><path d="M39.2 38.5h9l7.4 7.4v15" stroke-linecap="round"/></g><path d="M39.6 44.400000000000006l9.2 9.2h-9.2z" fill="#cbb593"/></svg><span>Documents</span></div>
<div class="fold" style="left:533px;top:67px"><svg width="86" height="84" viewBox="-1 -1 86 84">
<path d="M3 2.6A1.600000000000001 1.600000000000001 0 0 1 4.6 1H33.2a2 2 0 0 1 1.4.6L42 10.3H79.4A1.600000000000001 1.600000000000001 0 0 1 81 11.9V60H3Z" fill="url(#fb)"/>
<path d="M0 32.4A1.600000000000001 1.600000000000001 0 0 1 1.6 30.8H23.2a2.4 2.4 0 0 0 1.8-.8L30.6 22.6a2.4 2.4 0 0 1 1.8-.8H82.4A1.600000000000001 1.600000000000001 0 0 1 84 23.400000000000002V79.8A1.600000000000001 1.600000000000001 0 0 1 82.4 81.4H1.6A1.600000000000001 1.600000000000001 0 0 1 0 79.8Z" fill="url(#ff1)"/>
<path d="M0 79.6h84v.2a1.600000000000001 1.600000000000001 0 0 1-1.6 1.600000000000001H1.6A1.600000000000001 1.600000000000001 0 0 1 0 79.8Z" fill="#d0ba98"/>
<path d="M1 82h82" stroke="#000" stroke-opacity=".1" stroke-width="1.2"/>
<g fill="#cbb593"><circle cx="42" cy="38.9" r="2.1"/><circle cx="42" cy="46.5" r="2.1"/><circle cx="42" cy="53.9" r="2.1"/></g><path d="M31.5 55l10.5 10.600000000000001 10.5-10.600000000000001" fill="none" stroke="#cbb593" stroke-width="3.2" stroke-linecap="round" stroke-linejoin="round"/></svg><span>Downloads</span></div>
<div class="fold" style="left:692px;top:67px"><svg width="86" height="84" viewBox="-1 -1 86 84">
<path d="M3 2.6A1.600000000000001 1.600000000000001 0 0 1 4.6 1H33.2a2 2 0 0 1 1.4.6L42 10.3H79.4A1.600000000000001 1.600000000000001 0 0 1 81 11.9V60H3Z" fill="url(#fb)"/>
<path d="M0 32.4A1.600000000000001 1.600000000000001 0 0 1 1.6 30.8H23.2a2.4 2.4 0 0 0 1.8-.8L30.6 22.6a2.4 2.4 0 0 1 1.8-.8H82.4A1.600000000000001 1.600000000000001 0 0 1 84 23.400000000000002V79.8A1.600000000000001 1.600000000000001 0 0 1 82.4 81.4H1.6A1.600000000000001 1.600000000000001 0 0 1 0 79.8Z" fill="url(#ff1)"/>
<path d="M0 79.6h84v.2a1.600000000000001 1.600000000000001 0 0 1-1.6 1.600000000000001H1.6A1.600000000000001 1.600000000000001 0 0 1 0 79.8Z" fill="#d0ba98"/>
<path d="M1 82h82" stroke="#000" stroke-opacity=".1" stroke-width="1.2"/>
<g fill="none" stroke="#cbb593" stroke-width="3"><circle cx="31" cy="60.5" r="5.4"/><circle cx="49.2" cy="60.5" r="5.4"/><path d="M36.4 60.5V41.5H54.6V60.5"/></g></svg><span>Music</span></div>
<div class="fold" style="left:215px;top:199px"><svg width="86" height="84" viewBox="-1 -1 86 84">
<path d="M3 2.6A1.600000000000001 1.600000000000001 0 0 1 4.6 1H33.2a2 2 0 0 1 1.4.6L42 10.3H79.4A1.600000000000001 1.600000000000001 0 0 1 81 11.9V60H3Z" fill="url(#fb)"/>
<path d="M0 32.4A1.600000000000001 1.600000000000001 0 0 1 1.6 30.8H23.2a2.4 2.4 0 0 0 1.8-.8L30.6 22.6a2.4 2.4 0 0 1 1.8-.8H82.4A1.600000000000001 1.600000000000001 0 0 1 84 23.400000000000002V79.8A1.600000000000001 1.600000000000001 0 0 1 82.4 81.4H1.6A1.600000000000001 1.600000000000001 0 0 1 0 79.8Z" fill="url(#ff1)"/>
<path d="M0 79.6h84v.2a1.600000000000001 1.600000000000001 0 0 1-1.6 1.600000000000001H1.6A1.600000000000001 1.600000000000001 0 0 1 0 79.8Z" fill="#d0ba98"/>
<path d="M1 82h82" stroke="#000" stroke-opacity=".1" stroke-width="1.2"/>
<g fill="none" stroke="#cbb593" stroke-width="2.6" stroke-linecap="round" stroke-linejoin="round"><path d="M31.4 65.6H28a3 3 0 0 1-3-3V43a3 3 0 0 1 3-3h6.4l2.6-2.6h11.6l2.6 2.6H58a3 3 0 0 1 3 3v19.6a3 3 0 0 1-3 3h-4.6"/><circle cx="43.2" cy="54.4" r="8.6"/><circle cx="43.2" cy="54.4" r="4.2" stroke-width="3"/></g></svg><span>Pictures</span></div>
<div class="fold" style="left:374px;top:199px"><svg width="86" height="84" viewBox="-1 -1 86 84">
<path d="M3 2.6A1.600000000000001 1.600000000000001 0 0 1 4.6 1H33.2a2 2 0 0 1 1.4.6L42 10.3H79.4A1.600000000000001 1.600000000000001 0 0 1 81 11.9V60H3Z" fill="url(#fb)"/>
<path d="M0 32.4A1.600000000000001 1.600000000000001 0 0 1 1.6 30.8H23.2a2.4 2.4 0 0 0 1.8-.8L30.6 22.6a2.4 2.4 0 0 1 1.8-.8H82.4A1.600000000000001 1.600000000000001 0 0 1 84 23.400000000000002V79.8A1.600000000000001 1.600000000000001 0 0 1 82.4 81.4H1.6A1.600000000000001 1.600000000000001 0 0 1 0 79.8Z" fill="url(#ff1)"/>
<path d="M0 79.6h84v.2a1.600000000000001 1.600000000000001 0 0 1-1.6 1.600000000000001H1.6A1.600000000000001 1.600000000000001 0 0 1 0 79.8Z" fill="#d0ba98"/>
<path d="M1 82h82" stroke="#000" stroke-opacity=".1" stroke-width="1.2"/>
<g fill="none" stroke="#cbb593" stroke-width="2.8"><circle cx="42" cy="60.7" r="4.6"/><path d="M36.6 54.6L25.400000000000002 43.4M48 54.6L59 43.4" stroke-linecap="round"/><path d="M33.6 43.4H25v8.6M50.8 43.4H59.4v8.6" stroke-linejoin="miter"/></g></svg><span>Public</span></div>
<div class="fold" style="left:533px;top:199px"><svg width="86" height="84" viewBox="-1 -1 86 84">
<path d="M3 2.6A1.600000000000001 1.600000000000001 0 0 1 4.6 1H33.2a2 2 0 0 1 1.4.6L42 10.3H79.4A1.600000000000001 1.600000000000001 0 0 1 81 11.9V60H3Z" fill="url(#fb)"/>
<path d="M0 32.4A1.600000000000001 1.600000000000001 0 0 1 1.6 30.8H23.2a2.4 2.4 0 0 0 1.8-.8L30.6 22.6a2.4 2.4 0 0 1 1.8-.8H82.4A1.600000000000001 1.600000000000001 0 0 1 84 23.400000000000002V79.8A1.600000000000001 1.600000000000001 0 0 1 82.4 81.4H1.6A1.600000000000001 1.600000000000001 0 0 1 0 79.8Z" fill="url(#ff1)"/>
<path d="M0 79.6h84v.2a1.600000000000001 1.600000000000001 0 0 1-1.6 1.600000000000001H1.6A1.600000000000001 1.600000000000001 0 0 1 0 79.8Z" fill="#d0ba98"/>
<path d="M1 82h82" stroke="#000" stroke-opacity=".1" stroke-width="1.2"/>
<g fill="#cbb593"><path d="M30 37.2h14.600000000000001l9.4 9.4V67H49V64.4H51.4V48.8L43.4 48.8V39.8H32.6V50H30z"/><path d="M43.4 39.8l8 9h-8z"/><rect x="30" y="52.6" width="2.6" height="2.8"/><rect x="30" y="58.4" width="2.6" height="2.8"/><rect x="30" y="64.2" width="2.6" height="2.8"/><rect x="35.6" y="64.2" width="2.8" height="2.8"/><rect x="41.4" y="64.2" width="2.8" height="2.8"/></g></svg><span>Templates</span></div>
<div class="fold" style="left:692px;top:199px"><svg width="86" height="84" viewBox="-1 -1 86 84">
<path d="M3 2.6A1.600000000000001 1.600000000000001 0 0 1 4.6 1H33.2a2 2 0 0 1 1.4.6L42 10.3H79.4A1.600000000000001 1.600000000000001 0 0 1 81 11.9V60H3Z" fill="url(#fb)"/>
<path d="M0 32.4A1.600000000000001 1.600000000000001 0 0 1 1.6 30.8H23.2a2.4 2.4 0 0 0 1.8-.8L30.6 22.6a2.4 2.4 0 0 1 1.8-.8H82.4A1.600000000000001 1.600000000000001 0 0 1 84 23.400000000000002V79.8A1.600000000000001 1.600000000000001 0 0 1 82.4 81.4H1.6A1.600000000000001 1.600000000000001 0 0 1 0 79.8Z" fill="url(#ff1)"/>
<path d="M0 79.6h84v.2a1.600000000000001 1.600000000000001 0 0 1-1.6 1.600000000000001H1.6A1.600000000000001 1.600000000000001 0 0 1 0 79.8Z" fill="#d0ba98"/>
<path d="M1 82h82" stroke="#000" stroke-opacity=".1" stroke-width="1.2"/>
<g fill="#c7af8b"><rect x="30" y="43.1" width="26.8" height="20.6" rx="3"/><path d="M21 45.800000000000004v15.2l9-7.6z"/></g></svg><span>Videos</span></div></div>
</div>
<div id="alma" class="abs" style="left:91px;top:670px;font-weight:bold;font-size:27.4px;line-height:32px;color:#646464;letter-spacing:-1.4px">AlmaLinux</div>
<svg class="abs" style="left:79px;top:668px" width="10" height="28" viewBox="0 0 10 28"><path d="M0 3h3.4v7H0z" fill="#9a7414"/><circle cx="2.4" cy="4" r="1.8" fill="#9a7414"/><path d="M0 14c3.6 0 6 2.400000000000001 6 6l-6 4z" fill="#47761a"/><circle cx="6" cy="22" r="2" fill="#47761a"/></svg>
</body>
</html>
